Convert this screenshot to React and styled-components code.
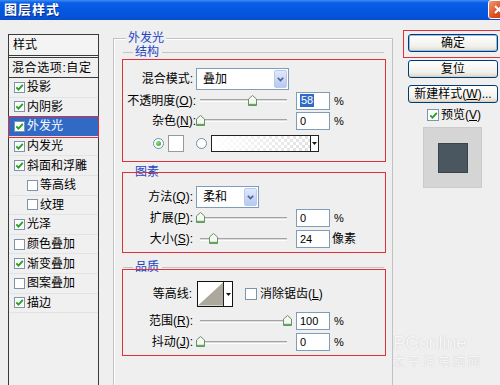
import React from "react";
import styled, { createGlobalStyle } from "styled-components";

const FONT = `"Liberation Sans", "Noto Sans CJK SC", sans-serif`;

const Global = createGlobalStyle`
  html, body { margin: 0; padding: 0; background: #efefef; }
  * { box-sizing: border-box; }
`;

const Window = styled.div`
  width: 500px;
  height: 385px;
  overflow: hidden;
  position: relative;
  background: #efefef;
  display: flex;
  flex-direction: column;
  font-family: ${FONT};
  font-size: 12px;
  line-height: 14px;
  color: #000;
`;

const TitleBar = styled.div`
  height: 20px;
  flex: none;
  display: flex;
  align-items: center;
  justify-content: space-between;
  padding-left: 4px;
  background: linear-gradient(#3b8cf6 0%, #0a5fe6 14%, #0557e0 50%, #0452d8 86%, #0b4cc8 100%);
`;

const Title = styled.span`
  color: #fff;
  font-weight: bold;
  font-size: 13px;
  letter-spacing: 1px;
  line-height: 20px;
  text-shadow: 1px 1px 0 #0a2f8a;
`;

const CloseBtn = styled.div`
  width: 21px;
  height: 19px;
  margin-right: -9px;
  margin-top: -2px;
  border: 1px solid #fff;
  border-radius: 3px;
  background: linear-gradient(135deg, #f29a78, #dc4c1e 55%, #c43a12);
  display: flex;
  align-items: center;
  justify-content: center;
`;

const Body = styled.div`
  flex: 1;
  display: flex;
  align-items: flex-start;
  padding-left: 8px;
`;

/* ---------- left list ---------- */
const StylesPanel = styled.div`
  width: 91px;
  height: 360px;
  margin-top: 14px;
  flex: none;
  border: 1px solid #3a3a3a;
  background: #f0f0f0;
  display: flex;
  flex-direction: column;
`;

const PanelHeader = styled.div`
  height: 23px;
  flex: none;
  padding-left: 4px;
  display: flex;
  align-items: center;
  background: #f4f4f4;
  border-bottom: 3px double #3a3a3a;
`;

const BlendRow = styled.div`
  height: 20px;
  flex: none;
  padding-left: 3px;
  display: flex;
  align-items: center;
  letter-spacing: 0.6px;
  border-bottom: 1px solid #3a3a3a;
`;

const Item = styled.div`
  height: 19.6px;
  flex: none;
  display: flex;
  align-items: center;
  gap: 2px;
  padding-left: ${(p) => (p.$indent ? 18 : 5)}px;
  border-bottom: 1px solid #e3e3e3;
  background: ${(p) => (p.$sel ? "#316ac5" : "transparent")};
  color: ${(p) => (p.$sel ? "#fff" : "#000")};
  outline: ${(p) => (p.$sel ? "1px solid #d8303c" : "none")};
  position: relative;
`;

const Box = styled.span`
  width: ${(p) => p.$s || 11}px;
  height: ${(p) => p.$s || 11}px;
  flex: none;
  border: 1px solid #7f93ad;
  background: #fff;
  display: inline-flex;
  align-items: center;
  justify-content: center;
`;

const Check = ({ on, s }) => (
  <Box $s={s}>
    {on && (
      <svg width="9" height="9" viewBox="0 0 9 9">
        <path d="M1.3 4.4 L3.5 6.7 L7.8 1.8" stroke="#21a121" strokeWidth="1.8" fill="none" />
      </svg>
    )}
  </Box>
);

/* ---------- main frame ---------- */
const MainFrame = styled.div`
  width: 280px;
  height: 380px;
  margin-left: 14px;
  margin-top: 18px;
  flex: none;
  border: 1px solid #c2c2c2;
  box-shadow: inset 1px 1px 0 #fff;
  padding: 0 6px 0 8px;
  display: flex;
  flex-direction: column;
`;

const FrameLegend = styled.div`
  align-self: flex-start;
  margin: -8px 0 0 4px;
  padding: 0 2px;
  height: 14px;
  background: #efefef;
  color: #1d44c4;
`;

const SecLegend = styled.div`
  display: flex;
  align-items: center;
  height: 14px;
  margin-top: ${(p) => p.$mt}px;
  padding-left: 1px;
  color: #1d44c4;
  &::before {
    content: "";
    width: 10px;
    height: 1px;
    background: #c4c4c4;
    margin-right: 2px;
  }
  &::after {
    content: "";
    flex: 1;
    height: 1px;
    background: #c4c4c4;
    margin-left: 3px;
    margin-right: 2px;
  }
`;

const RedBox = styled.div`
  border: 1px solid #e0303c;
  margin-top: ${(p) => p.$mt}px;
  padding: ${(p) => p.$pt}px 0 ${(p) => p.$pb}px 0;
  display: flex;
  flex-direction: column;
  position: relative;
`;

const Row = styled.div`
  display: flex;
  align-items: center;
  height: ${(p) => p.$h}px;
  margin-top: ${(p) => p.$mt || 0}px;
  padding-left: ${(p) => p.$pl || 0}px;
  flex: none;
`;

const Label = styled.div`
  width: 73px;
  flex: none;
  text-align: right;
  padding-right: ${(p) => p.$pr || 0}px;
  white-space: nowrap;
`;

const Select = styled.div`
  width: ${(p) => p.$w}px;
  height: 22px;
  flex: none;
  border: 1px solid #7f9db9;
  background: #fff;
  display: flex;
  align-items: center;
  justify-content: space-between;
  padding: 1px 1px 1px 6px;
`;

const SelectBtn = styled.span`
  width: 13px;
  height: 18px;
  border: 1px solid #b9c9ef;
  border-radius: 2px;
  background: linear-gradient(#e0e9fd, #b6c9f3);
  display: flex;
  align-items: center;
  justify-content: center;
`;

const Chevron = () => (
  <svg width="7" height="5" viewBox="0 0 7 5">
    <path d="M0.8 0.8 L3.5 3.6 L6.2 0.8" stroke="#4d6185" strokeWidth="1.6" fill="none" />
  </svg>
);

const SliderWrap = styled.div`
  width: 100px;
  height: 18px;
  flex: none;
  position: relative;
  display: flex;
  align-items: center;
  padding: 0 9px 0 4px;
`;

const Track = styled.div`
  flex: 1;
  height: 3px;
  border-top: 1px solid #a4a4a4;
  border-bottom: 1px solid #fdfdfd;
  background: #dcdcdc;
`;

const Thumb = styled.svg`
  position: absolute;
  top: 3px;
`;

const Slider = ({ frac }) => (
  <SliderWrap>
    <Track />
    <Thumb width="9" height="11" viewBox="0 0 9 11" style={{ left: `${4 + frac * 87 - 4.5}px` }}>
      <polygon points="0.5,4 4.5,0.5 8.5,4 8.5,10.5 0.5,10.5" fill="#f6f8f2" stroke="#6b8f68" />
      <line x1="1" y1="9.5" x2="8" y2="9.5" stroke="#58b058" strokeWidth="1.4" />
    </Thumb>
  </SliderWrap>
);

const Input = styled.div`
  width: 34px;
  height: 18px;
  flex: none;
  border: 1px solid #7f9db9;
  background: #fff;
  padding-left: 3px;
  font-size: 11px;
  display: flex;
  align-items: center;
`;

const Hl = styled.span`
  background: #316ac5;
  color: #fff;
  padding: 0 1px;
  line-height: 13px;
`;

const Unit = styled.span`
  margin-left: ${(p) => p.$ml || 4}px;
  font-size: ${(p) => (p.$cjk ? 12 : 11)}px;
`;

const Radio = styled.span`
  width: 11px;
  height: 11px;
  flex: none;
  margin-left: ${(p) => p.$ml || 0}px;
  border-radius: 50%;
  border: 1px solid #6f8bab;
  background: #fff;
  display: flex;
  align-items: center;
  justify-content: center;
  &::after {
    content: "";
    width: 5px;
    height: 5px;
    border-radius: 50%;
    background: ${(p) => (p.$on ? "radial-gradient(circle at 35% 35%, #8de08d, #21a121)" : "transparent")};
  }
`;

const Swatch = styled.span`
  width: 16px;
  height: 17px;
  flex: none;
  margin-left: 4px;
  border: 1px solid #9a9a9a;
  background: #fff;
`;

const GradBox = styled.div`
  width: 108px;
  height: 17px;
  flex: none;
  margin-left: 4px;
  border: 1px solid #222;
  display: flex;
`;

const GradFill = styled.div`
  flex: 1;
  background-image: linear-gradient(to right, #fff 0%, rgba(255, 255, 255, 0.2) 100%),
    linear-gradient(45deg, #d8d8d8 25%, transparent 25%, transparent 75%, #d8d8d8 75%),
    linear-gradient(45deg, #d8d8d8 25%, transparent 25%, transparent 75%, #d8d8d8 75%);
  background-size: 100% 100%, 6px 6px, 6px 6px;
  background-position: 0 0, 0 0, 3px 3px;
  background-color: #fff;
`;

const DropPart = styled.div`
  width: ${(p) => p.$w || 8}px;
  flex: none;
  border-left: 1px solid #222;
  background: #fff;
  display: flex;
  align-items: center;
  justify-content: center;
`;

const Tri = () => (
  <svg width="5" height="3" viewBox="0 0 5 3">
    <polygon points="0,0 5,0 2.5,3" fill="#111" />
  </svg>
);

const ContourBox = styled.div`
  width: 36px;
  height: 26px;
  flex: none;
  margin-left: 1px;
  border: 1px solid #111;
  display: flex;
  background: #fff;
`;

const BoxSlot = styled.span`
  display: flex;
  margin-left: ${(p) => p.$ml || 0}px;
`;

const CheckLabel = styled.span`
  margin-left: ${(p) => p.$ml || 3}px;
  white-space: nowrap;
`;

/* ---------- right column ---------- */
const RightCol = styled.div`
  width: 100px;
  margin-left: 10px;
  margin-top: 10px;
  flex: none;
  display: flex;
  flex-direction: column;
`;

const RedWrap = styled.div`
  border: 1px solid #e0303c;
  padding: 3px 0 5px 4px;
`;

const Button = styled.div`
  width: 90px;
  height: 18px;
  margin-top: ${(p) => p.$mt || 0}px;
  margin-left: ${(p) => p.$ml || 0}px;
  border: 1px solid #003c74;
  border-radius: 3px;
  background: linear-gradient(#ffffff, #f2f1ec 70%, #dcd8cc);
  box-shadow: ${(p) => (p.$def ? "inset 0 0 0 1px #9dbbeb" : "inset 0 -1px 0 #d6d0c5")};
  display: flex;
  align-items: center;
  justify-content: center;
  white-space: nowrap;
`;

const PreviewRow = styled.div`
  display: flex;
  align-items: center;
  height: 12px;
  margin-top: 6px;
  margin-left: 24px;
`;

const Preview = styled.div`
  width: 59px;
  height: 61px;
  margin-top: 6px;
  margin-left: 20px;
  background: #d5d5d5;
  border: 1px solid #cbcbcb;
  display: flex;
  align-items: center;
  justify-content: center;
`;

const PreviewSwatch = styled.div`
  width: 30px;
  height: 30px;
  background: #4a5760;
  border: 1px solid #39434a;
`;

const Watermark = styled.div`
  position: absolute;
  left: 393px;
  top: 333px;
  display: flex;
  flex-direction: column;
  gap: 2px;
  color: rgba(255, 255, 255, 0.9);
  text-shadow: 0 0 1px #b8b8b8;
  pointer-events: none;
`;

const WmBig = styled.span`
  font-family: "Liberation Sans", sans-serif;
  font-size: 19px;
  line-height: 19px;
  height: 19px;
  letter-spacing: -0.5px;
`;

const WmSmall = styled.span`
  font-family: "Noto Sans CJK SC", sans-serif;
  font-size: 12px;
  line-height: 13px;
  height: 13px;
  letter-spacing: 3px;
`;

const items = [
  { t: "投影", c: true },
  { t: "内阴影", c: true },
  { t: "外发光", c: true, sel: true },
  { t: "内发光", c: true },
  { t: "斜面和浮雕", c: true },
  { t: "等高线", c: false, ind: true },
  { t: "纹理", c: false, ind: true },
  { t: "光泽", c: true },
  { t: "颜色叠加", c: false },
  { t: "渐变叠加", c: true },
  { t: "图案叠加", c: false },
  { t: "描边", c: true },
];

export default function App() {
  return (
    <>
      <Global />
      <Window>
        <TitleBar>
          <Title>图层样式</Title>
          <CloseBtn>
            <svg width="9" height="9" viewBox="0 0 9 9">
              <path d="M1 1 L8 8 M8 1 L1 8" stroke="#fff" strokeWidth="2" />
            </svg>
          </CloseBtn>
        </TitleBar>
        <Body>
          <StylesPanel>
            <PanelHeader>样式</PanelHeader>
            <BlendRow>混合选项:自定</BlendRow>
            {items.map((it) => (
              <Item key={it.t} $indent={it.ind} $sel={it.sel}>
                <Check on={it.c} />
                <span>{it.t}</span>
              </Item>
            ))}
          </StylesPanel>

          <MainFrame>
            <FrameLegend>外发光</FrameLegend>

            <SecLegend $mt={0}>结构</SecLegend>
            <RedBox $mt={0} $pt={8} $pb={9}>
              <Row $h={22}>
                <Label $pr={3}>混合模式:</Label>
                <Select $w={93}>
                  <span>叠加</span>
                  <SelectBtn>
                    <Chevron />
                  </SelectBtn>
                </Select>
              </Row>
              <Row $h={19} $mt={1}>
                <Label>
                  不透明度(<u>O</u>):
                </Label>
                <Slider frac={0.6} />
                <Input>
                  <Hl>58</Hl>
                </Input>
                <Unit>%</Unit>
              </Row>
              <Row $h={19} $mt={1}>
                <Label>
                  杂色(<u>N</u>):
                </Label>
                <Slider frac={0} />
                <Input>0</Input>
                <Unit>%</Unit>
              </Row>
              <Row $h={18} $mt={4} $pl={30}>
                <Radio $on />
                <Swatch />
                <Radio $ml={12} />
                <GradBox>
                  <GradFill />
                  <DropPart>
                    <Tri />
                  </DropPart>
                </GradBox>
              </Row>
            </RedBox>

            <SecLegend $mt={3}>图素</SecLegend>
            <RedBox $mt={-7} $pt={13} $pb={4}>
              <Row $h={22}>
                <Label $pr={3}>
                  方法(<u>Q</u>):
                </Label>
                <Select $w={63}>
                  <span>柔和</span>
                  <SelectBtn>
                    <Chevron />
                  </SelectBtn>
                </Select>
              </Row>
              <Row $h={18} $mt={1}>
                <Label $pr={3}>
                  扩展(<u>P</u>):
                </Label>
                <Slider frac={0} />
                <Input>0</Input>
                <Unit>%</Unit>
              </Row>
              <Row $h={18} $mt={3}>
                <Label $pr={3}>
                  大小(<u>S</u>):
                </Label>
                <Slider frac={0.15} />
                <Input>24</Input>
                <Unit $ml={2} $cjk>
                  像素
                </Unit>
              </Row>
            </RedBox>

            <SecLegend $mt={7}>品质</SecLegend>
            <RedBox $mt={-5} $pt={11} $pb={4}>
              <Row $h={26}>
                <Label $pr={4}>等高线:</Label>
                <ContourBox>
                  <svg width="26" height="24" viewBox="0 0 26 24">
                    <rect width="26" height="24" fill="#fff" />
                    <polygon points="0,24 26,0 26,24" fill="#aca89b" />
                  </svg>
                  <DropPart $w={9}>
                    <Tri />
                  </DropPart>
                </ContourBox>
                <BoxSlot $ml={12}>
                  <Check on={false} s={12} />
                </BoxSlot>
                <CheckLabel>
                  消除锯齿(<u>L</u>)
                </CheckLabel>
              </Row>
              <Row $h={18} $mt={5}>
                <Label $pr={3}>
                  范围(<u>R</u>):
                </Label>
                <Slider frac={1} />
                <Input>100</Input>
                <Unit>%</Unit>
              </Row>
              <Row $h={18} $mt={3}>
                <Label $pr={3}>
                  抖动(<u>J</u>):
                </Label>
                <Slider frac={0} />
                <Input>0</Input>
                <Unit>%</Unit>
              </Row>
            </RedBox>
          </MainFrame>

          <RightCol>
            <RedWrap>
              <Button $def>确定</Button>
            </RedWrap>
            <Button $mt={2} $ml={5}>
              复位
            </Button>
            <Button $mt={7} $ml={5}>
              新建样式(<u>W</u>)...
            </Button>
            <PreviewRow>
              <Check on s={12} />
              <CheckLabel $ml={2}>
                预览(<u>V</u>)
              </CheckLabel>
            </PreviewRow>
            <Preview>
              <PreviewSwatch />
            </Preview>
          </RightCol>
        </Body>
        <Watermark>
          <WmBig>PConline</WmBig>
          <WmSmall>太平洋电脑网</WmSmall>
        </Watermark>
      </Window>
    </>
  );
}
